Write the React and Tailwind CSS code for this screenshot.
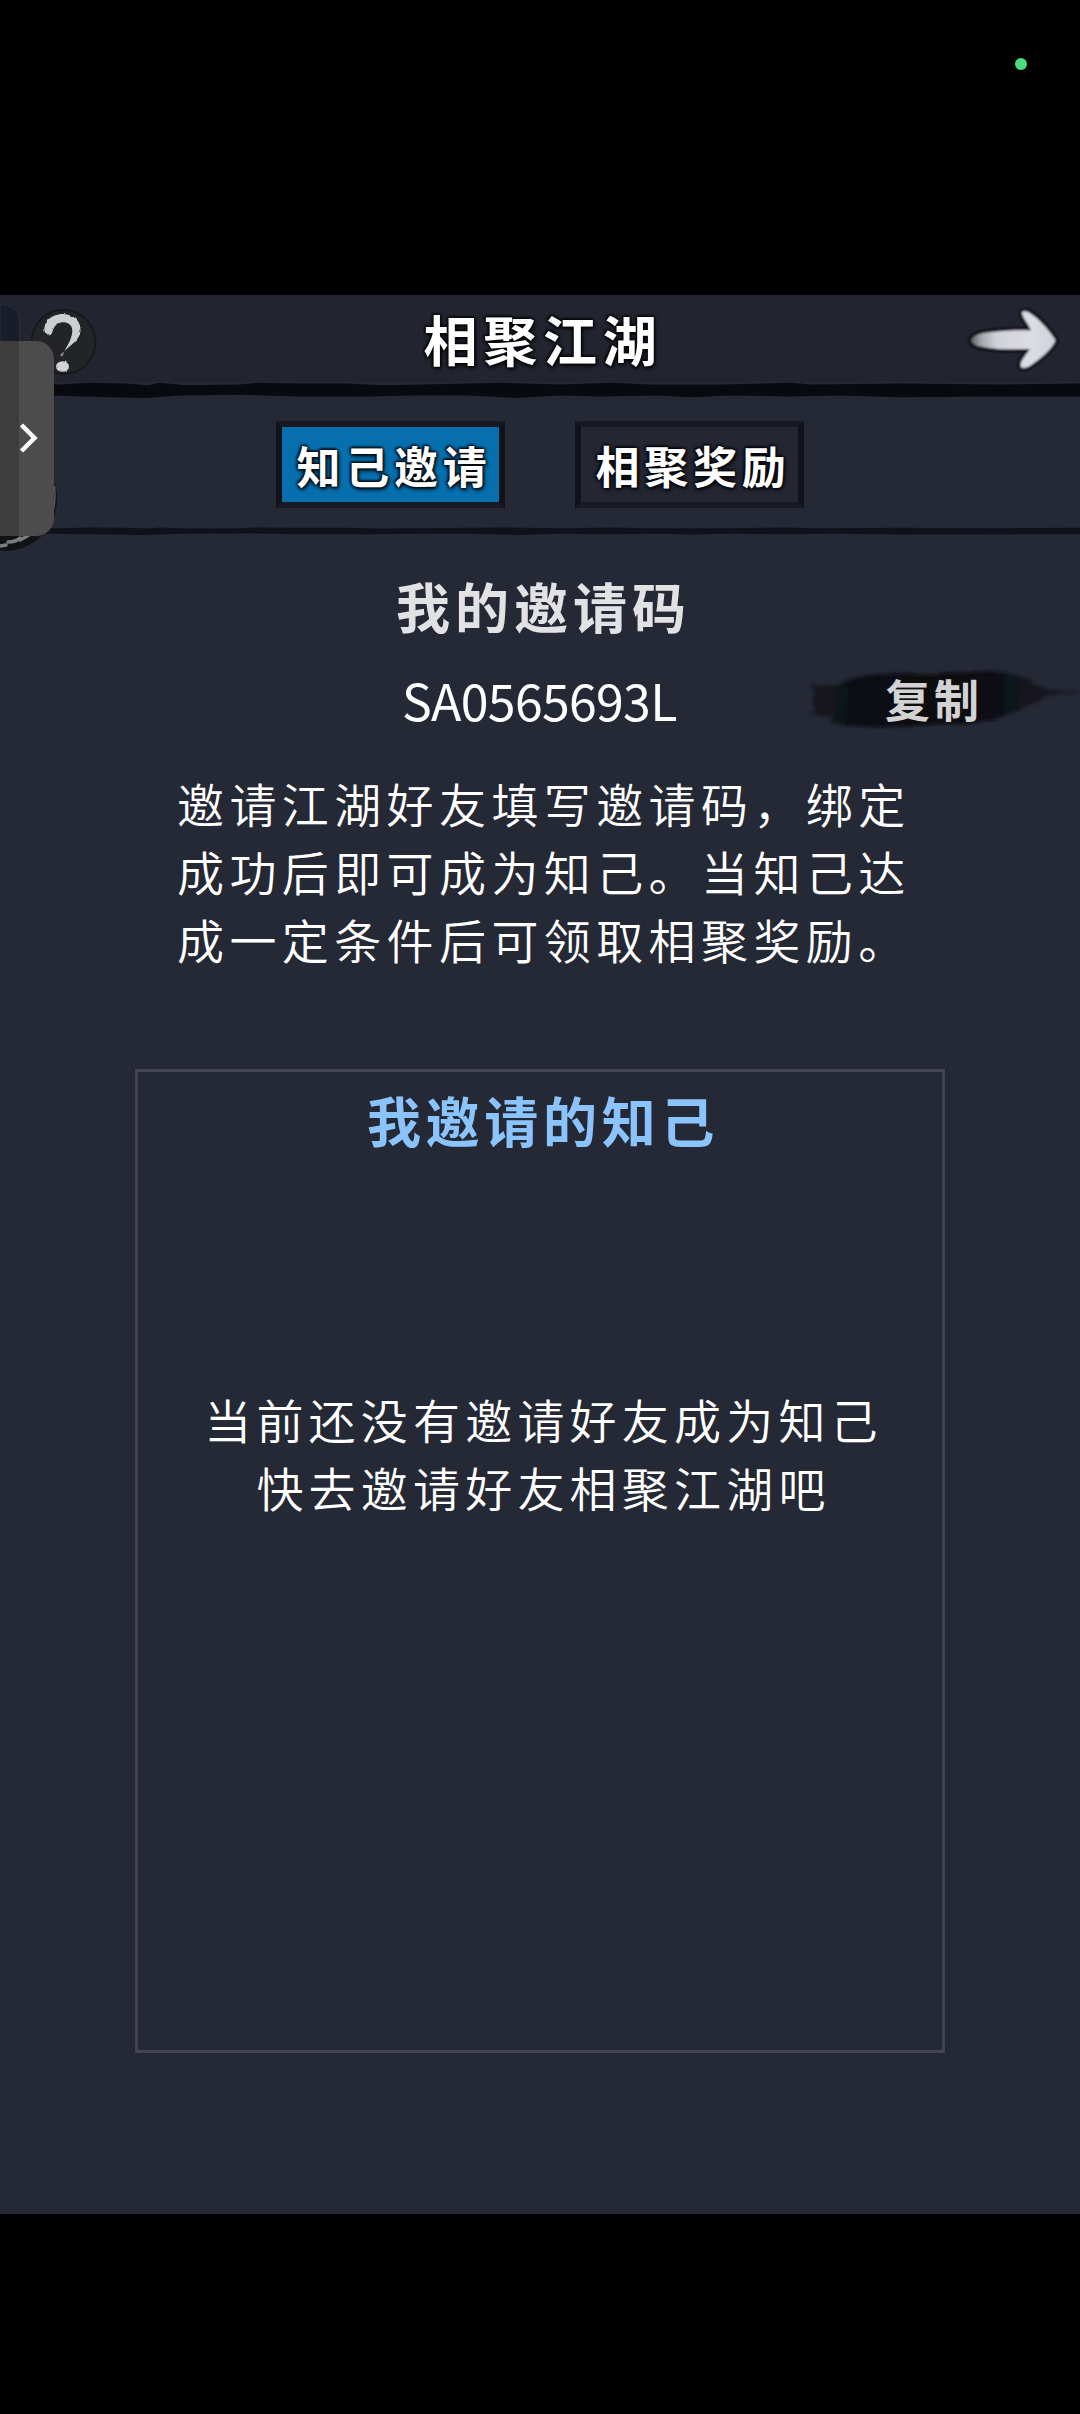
const tabs = [
  { label: "知己邀请", active: true },
  { label: "相聚奖励", active: false },
];

// black outline around the light lettering
const OUTLINE =
  "[text-shadow:0_0_3px_#05060a,0_0_3px_#05060a,1px_2px_4px_#05060a,-1px_-1px_3px_#05060a]";

function HelpIcon() {
  return (
    <svg width="68" height="68" viewBox="0 0 68 68" className="block">
      <defs>
        <filter id="soft" x="-10%" y="-10%" width="120%" height="120%">
          <feTurbulence type="fractalNoise" baseFrequency="0.2" numOctaves="2" result="n" />
          <feDisplacementMap
            in="SourceGraphic"
            in2="n"
            scale="2.5"
            xChannelSelector="R"
            yChannelSelector="G"
          />
          <feGaussianBlur stdDeviation="0.5" />
        </filter>
      </defs>
      <circle cx="33.5" cy="34" r="32" fill="#232428" stroke="#17181c" strokeWidth="2" />
      <g filter="url(#soft)">
        <path
          d="M14.500 23 C13.500 13 22 6 33 6 C44 6.500 51 13 50.500 23 C50 31 42 36 34.500 43 C39 35 42.500 29 42.300 22 C42 16 36 13.500 31 14.500 C25.500 15.500 24 19 22 25 C20 29 15.500 27.500 14.500 23 Z"
          fill="#cdced1"
        />
        <path d="M31.500 45 L34.500 43.500 L32.500 48.500 L30 48 Z" fill="#85868a" />
        <ellipse cx="32.500" cy="58.500" rx="6.500" ry="5.300" fill="#d3d4d6" />
      </g>
    </svg>
  );
}

function ArrowIcon() {
  return (
    <svg width="94" height="66" viewBox="0 0 94 66" className="block">
      <defs>
        <linearGradient id="arrow" x1="0" y1="0" x2="1" y2="0">
          <stop offset="0" stopColor="#5d5f64" />
          <stop offset="0.12" stopColor="#a4a6ab" />
          <stop offset="0.3" stopColor="#d0d2d8" />
          <stop offset="0.7" stopColor="#dcdde4" />
          <stop offset="1" stopColor="#d0d2d9" />
        </linearGradient>
        <filter id="arrowSoft" x="-10%" y="-10%" width="120%" height="120%">
          <feGaussianBlur stdDeviation="0.8" />
        </filter>
      </defs>
      <path
        d="M5 33 C8 27 17 25.500 31 24.500 C43 23.500 54 23 65 23.500 C62 16 56 10 56 5.500 C58 2.500 63 5 68 9 C76 15 86 27 89.500 33.500 C87 40 77 50 68 56 C62 61 56 62.500 54.500 59 C54.500 53 60 48 64 42 C50 41.500 38 43 28 41.500 C17 40 6 39.500 5 33 Z"
        fill="url(#arrow)"
        stroke="#0e1015"
        strokeWidth="6"
        strokeLinejoin="round"
        paintOrder="stroke"
        filter="url(#arrowSoft)"
      />
    </svg>
  );
}

function InkLine({ className, fill }) {
  return (
    <svg viewBox="0 0 1080 20" preserveAspectRatio="none" className={className}>
      <path
        d="M0 2 L60 3 L90 1 L125 2 L148 4 L160 1 L185 4 L240 3 L258 1 L300 2 L345 2 L385 4 L470 2 L500 1 L560 3 L612 1 L650 3 L720 3 L790 1 L812 3 L900 2 L1000 3 L1080 2 V18 L990 18 L900 19 L840 17 L790 18 L730 17 L690 19 L660 17 L600 18 L560 17 L515 20 L470 17 L410 17 L370 18 L300 18 L240 16 L180 17 L145 20 L110 19 L50 17 L0 18 Z"
        className={fill}
      />
    </svg>
  );
}

function TabButton({ label, active }) {
  return (
    <button
      className={`flex h-[87px] w-[229px] items-center justify-center border-[6px] border-x-[#10121a] border-y-[#171a23] pl-[7px] text-[44px] leading-none font-bold tracking-[4.700px] text-white ${OUTLINE} ${
        active ? "bg-[#076fad]" : "bg-[#242732]"
      }`}
    >
      {label}
    </button>
  );
}

function CopyButton() {
  return (
    <button className="relative flex h-[68px] w-[280px] items-center pt-px pl-[85px]">
      <svg viewBox="0 0 280 68" className="absolute inset-0 h-full w-full overflow-visible">
        <defs>
          <linearGradient id="ink" x1="0" y1="0" x2="1" y2="0">
            <stop offset="0" stopColor="#171a22" />
            <stop offset="0.2" stopColor="#0c0e14" />
            <stop offset="0.55" stopColor="#08090e" />
            <stop offset="0.78" stopColor="#12151d" />
            <stop offset="1" stopColor="#191c26" />
          </linearGradient>
          <filter id="brush" x="-5%" y="-15%" width="110%" height="130%">
            <feTurbulence type="fractalNoise" baseFrequency="0.03 0.2" numOctaves="3" result="n" />
            <feDisplacementMap
              in="SourceGraphic"
              in2="n"
              scale="6"
              xChannelSelector="R"
              yChannelSelector="G"
            />
            <feGaussianBlur stdDeviation="1.7" />
          </filter>
        </defs>
        <path
          d="M11 18 L38 17 C58 7 90 4 122 6 C150 9 170 4 190 4 C214 5 232 14 246 21 L283 26 L246 29 C238 37 228 37 216 45 C190 57 150 59 120 58 C90 61 62 61 40 57 L28 57 L36 52 L8 48 L14 42 L10 34 L15 26 Z"
          fill="url(#ink)"
          filter="url(#brush)"
          transform="translate(0 3)"
        />
      </svg>
      <span className="relative text-[45px] leading-none font-bold tracking-[4px] text-[#d3d3d5]">
        复制
      </span>
    </button>
  );
}

function SideHandle() {
  return (
    <div className="absolute top-[9px] left-0 h-[248px] w-[60px]">
      <svg viewBox="0 0 60 248" className="absolute inset-0 h-full w-full">
        <path d="M0 1 H4 Q19.500 3 19.500 17 V240 H0 Z" fill="#191c29" stroke="#24323a" />
        <circle cx="5" cy="195" r="52" fill="#111317" />
        <path d="M54.500 182 Q56 196 53 208" fill="none" stroke="#55575a" strokeWidth="1.500" />
        <path
          d="M0 242 L6 241 M8 238 Q16 238 20 234 M20 236 Q30 231 36 226"
          fill="none"
          stroke="#7b7d7f"
          strokeWidth="3.500"
          strokeLinecap="round"
        />
      </svg>
      <button className="absolute top-[37px] left-0 h-[195px] w-[54px] overflow-hidden rounded-r-[18px] bg-[#4c4c4c]">
        <span className="block h-full w-5 border-r border-[#465052] bg-[#3d3d3d]" />
        <svg viewBox="0 0 54 195" className="absolute inset-0 h-full w-full">
          <path d="M21.500 84 L34.500 97 L21.500 110" fill="none" stroke="#fff" strokeWidth="4.500" />
        </svg>
      </button>
    </div>
  );
}

export default function App() {
  return (
    <div className="flex h-[2414px] w-[1080px] flex-col bg-black font-['Noto_Sans_CJK_SC',sans-serif] text-white">
      {/* Status area */}
      <div className="flex h-[295px] items-start justify-end pt-[58px] pr-[53px]">
        <span className="size-3 rounded-full bg-[#4bdc83]" />
      </div>

      <div className="relative flex h-[1919px] flex-col overflow-hidden bg-[#252935]">
        {/* Title bar */}
        <header className="flex h-[87px] shrink-0 items-center justify-between bg-[#22242f] pr-[20px] pl-[30px]">
          <div className="w-[94px] pt-[6px]">
            <HelpIcon />
          </div>
          <h1 className={`pr-1 text-[54px] leading-none font-bold tracking-[5.800px] ${OUTLINE}`}>
            相聚江湖
          </h1>
          <div className="pt-[3px]">
            <ArrowIcon />
          </div>
        </header>
        <InkLine className="block h-4 w-full shrink-0" fill="fill-[#080a0f]" />

        {/* Tabs */}
        <nav className="flex h-[129px] shrink-0 items-center justify-center gap-[70px] pt-[4px]">
          {tabs.map((tab) => (
            <TabButton key={tab.label} label={tab.label} active={tab.active} />
          ))}
        </nav>
        <InkLine className="block h-[8px] w-full shrink-0" fill="fill-[#10121a]" />

        {/* Invite code */}
        <section className="flex shrink-0 flex-col items-center pt-[41px]">
          <h2 className="pl-[7px] text-[54px] leading-[60px] font-bold tracking-[5px] text-[#e2e2e4]">
            我的邀请码
          </h2>
          <div className="mt-[28px] grid h-[68px] w-full grid-cols-[800px_280px] items-center">
            <span className="pl-[402px] pt-[2px] text-[50px] leading-none tracking-[-0.700px]">
              SA0565693L
            </span>
            <CopyButton />
          </div>
          <p className="mt-[37px] w-[738px] pl-[6px] text-[47px] leading-[68px] font-[350] tracking-[5.400px] whitespace-nowrap">
            邀请江湖好友填写邀请码，绑定
            <br />
            成功后即可成为知己。当知己达
            <br />
            成一定条件后可领取相聚奖励。
          </p>
        </section>

        {/* Invited friends */}
        <section className="mt-[96px] mr-[135px] ml-[135px] flex h-[984px] shrink-0 flex-col items-center border-[3px] border-[#42454f]">
          <h2 className="mt-[18px] pl-[6px] text-[54px] leading-[60px] font-bold tracking-[4.700px] text-[#8bc3fd]">
            我邀请的知己
          </h2>
          <p className="mt-[235px] pl-[7px] text-center text-[47px] leading-[68px] font-[350] tracking-[5.200px] whitespace-nowrap">
            当前还没有邀请好友成为知己
            <br />
            快去邀请好友相聚江湖吧
          </p>
        </section>

        <SideHandle />
      </div>
    </div>
  );
}
